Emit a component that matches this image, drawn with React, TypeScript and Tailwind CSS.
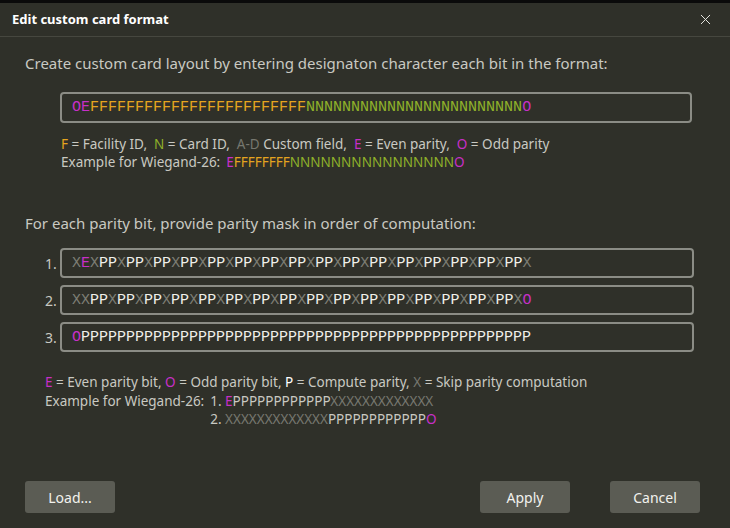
import { X } from "lucide-react";

const MONO = "font-['Liberation_Mono','DejaVu_Sans_Mono',monospace]";
const SANS = "font-['Noto_Sans','Open_Sans',sans-serif]";

const COLORS: Record<string, string> = {
  O: "text-[#c72fc7]",
  E: "text-[#c72fc7]",
  F: "text-[#e5a41f]",
  N: "text-[#90b22a]",
  X: "text-[#7c7d74]",
  P: "text-[#f0f0ea]",
};

// group consecutive chars of same kind into spans
function Colored({ text }: { text: string }) {
  const parts: { ch: string; s: string }[] = [];
  for (const c of text) {
    const last = parts[parts.length - 1];
    if (last && last.ch === c) last.s += c;
    else parts.push({ ch: c, s: c });
  }
  return (
    <>
      {parts.map((p, i) => (
        <span key={i} className={COLORS[p.ch]}>
          {p.s}
        </span>
      ))}
    </>
  );
}

const FORMAT = "OE" + "F".repeat(24) + "N".repeat(24) + "O";
const MASKS = [
  "XEX" + "PPX".repeat(16),
  "XX" + "PPX".repeat(16) + "O",
  "O" + "P".repeat(50),
];

function FieldBox({ value, wide }: { value: string; wide?: boolean }) {
  return (
    <div
      className={`${wide ? "w-[634px] h-[30px]" : "w-[632px] h-[31px]"} flex items-center px-[10px] border-2 border-[#8b8c85] rounded-[4px] ${MONO} text-[15px] leading-none`}
    >
      <Colored text={value} />
    </div>
  );
}

function Btn({ label }: { label: string }) {
  return (
    <button className="w-[90px] h-[32px] rounded-[3px] bg-[#5b5c54] text-[#f2f2ee] text-[14px]">
      {label}
    </button>
  );
}

export default function App() {
  return (
    <div className={`w-[730px] h-[528px] flex flex-col bg-[#2f3029] text-[#c9c9c2] ${SANS} overflow-hidden`}>
      <div className="h-[3px] bg-[#0a0a0a] flex-shrink-0" />

      {/* title bar */}
      <div className="h-[34px] flex items-center justify-between pl-[12px] pr-[16px] border-b border-[#46473f] flex-shrink-0">
        <span className="text-white font-bold text-[13px]">Edit custom card format</span>
        <X className="w-[17px] h-[17px] text-[#e5e5e0]" strokeWidth={1.4} />
      </div>

      <div className="flex-1 flex flex-col px-[25px]">
        <div className="mt-[16px] text-[15px] leading-[20px]">
          Create custom card layout by entering designaton character each bit in the format:
        </div>

        <div className="mt-[19px] ml-[35px]">
          <FieldBox value={FORMAT} />
        </div>

        <div className="mt-[12px] ml-[36px] text-[13.5px] leading-[18px] whitespace-nowrap">
          <div>
            <span className="text-[#e5a41f]">F</span> = Facility ID,&nbsp;{" "}
            <span className="text-[#90b22a]">N</span> = Card ID,&nbsp;{" "}
            <span className="text-[#76776f]">A-D</span> Custom field,&nbsp;{" "}
            <span className="text-[#c72fc7]">E</span> = Even parity,&nbsp;{" "}
            <span className="text-[#c72fc7]">O</span> = Odd parity
          </div>
          <div className="flex gap-[6px]">
            <span>Example for Wiegand-26:</span>
            <span>
              <Colored text={"E" + "F".repeat(8) + "N".repeat(16) + "O"} />
            </span>
          </div>
        </div>

        <div className="mt-[42px] text-[15px] leading-[20px]">
          For each parity bit, provide parity mask in order of computation:
        </div>

        <div className="mt-[15px] flex flex-col gap-[7px]">
          {MASKS.map((m, i) => (
            <div key={i} className="flex items-center">
              <span className="w-[35px] pl-[20px] text-[14px]">{i + 1}.</span>
              <FieldBox value={m} wide />
            </div>
          ))}
        </div>

        <div className="mt-[21px] ml-[20px] text-[13.5px] leading-[18.5px] whitespace-nowrap">
          <div>
            <span className="text-[#c72fc7]">E</span> = Even parity bit,{" "}
            <span className="text-[#c72fc7]">O</span> = Odd parity bit,{" "}
            <span className="text-white">P</span> = Compute parity,{" "}
            <span className="text-[#76776f]">X</span> = Skip parity computation
          </div>
          <div className="flex gap-[6px]">
            <span>Example for Wiegand-26:</span>
            <div className="flex flex-col">
              <div>
                1.{" "}
                <span className="text-[#c72fc7]">E</span>
                <span>{"P".repeat(12)}</span>
                <span className="text-[#76776f]">{"X".repeat(13)}</span>
              </div>
              <div>
                2.{" "}
                <span className="text-[#76776f]">{"X".repeat(13)}</span>
                <span>{"P".repeat(12)}</span>
                <span className="text-[#c72fc7]">O</span>
              </div>
            </div>
          </div>
        </div>

        <div className="mt-auto mb-[15px] mr-[5px] flex items-center">
          <Btn label="Load..." />
          <div className="flex-1" />
          <Btn label="Apply" />
          <div className="w-[40px]" />
          <Btn label="Cancel" />
        </div>
      </div>
    </div>
  );
}
